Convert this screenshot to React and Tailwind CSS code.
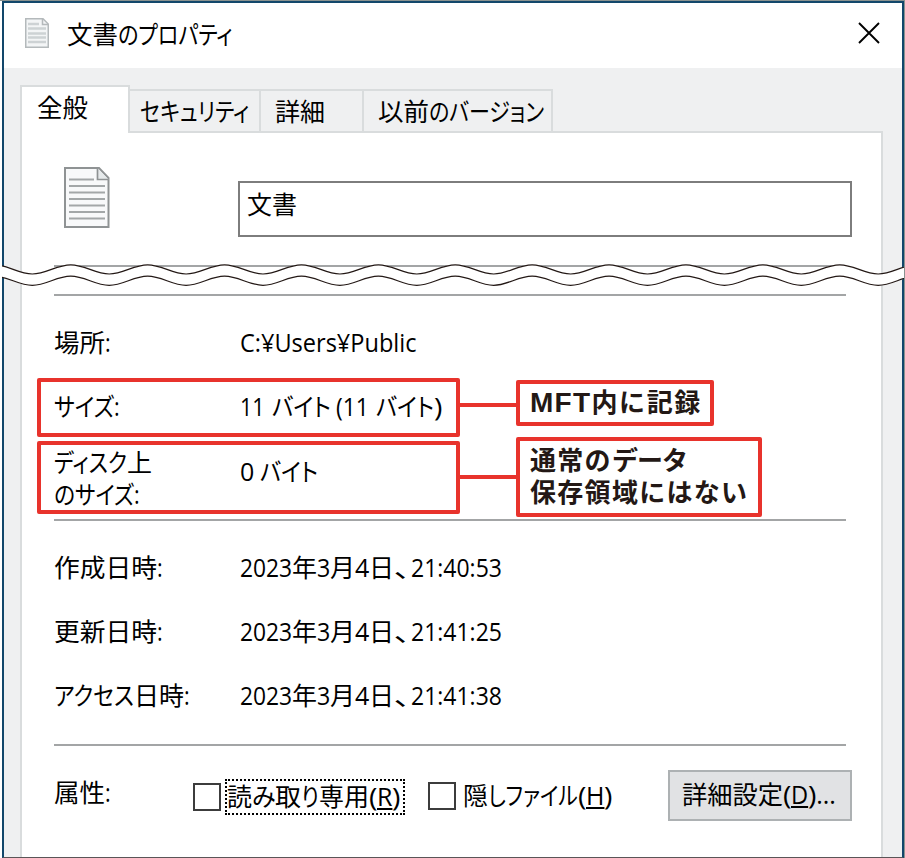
import React, { useLayoutEffect, useRef, useState } from "react";

const TABS = [
  { className: "w-[131px] pl-2.5", runs: [["セキュリティ", 109]] },
  { className: "w-[103px] pl-[14px]", runs: [["詳細", 50]] },
  { className: "w-[189px] pl-[14px]", runs: [["以前", 51], ["のバージョン", 115]] },
];

const DATES = [
  { label: [["作成日時", 103], [":", 6]], time: "21:40:53" },
  { label: [["更新日時", 103], [":", 6]], time: "21:41:25" },
  { label: [["アクセス", 80], ["日時", 50], [":", 6]], time: "21:41:38" },
];

// one piece of text squeezed to a fixed width, like the narrow kana of the Windows UI font
function Run({ w, children }) {
  const ref = useRef(null);
  const [scale, setScale] = useState(1);

  useLayoutEffect(() => {
    setScale(w / ref.current.offsetWidth);
  }, [w, children]);

  return (
    <span className="inline-block" style={{ width: w }}>
      <span ref={ref} className="inline-block origin-left whitespace-pre" style={{ transform: `scaleX(${scale})` }}>
        {children}
      </span>
    </span>
  );
}

function Text({ runs, className = "" }) {
  return (
    <span className={"flex h-8 shrink-0 whitespace-pre leading-8 [font-feature-settings:'palt'] " + className}>
      {runs.map(([text, w], i) => <Run key={i} w={w}>{text}</Run>)}
    </span>
  );
}

function Divider({ className = "" }) {
  return <div className={"ml-8 h-0.5 w-[792px] shrink-0 bg-[#a3a5a6] " + className} />;
}

function SmallDocIcon() {
  return (
    <svg width="24" height="30" viewBox="0 0 24 30" fill="none">
      <path d="M.75.75H18L23.250 6V29.250H.75Z" fill="#f3f5f6" stroke="#b4b9bb" strokeWidth="1.500" />
      <path d="M17.500 1V6.500H23" stroke="#b4b9bb" strokeWidth="1.500" />
      <path d="M3 6H14M3 10.500H21M3 15.500H21M3 19.500H21M3 24H21" stroke="#cdd2d4" strokeWidth="2.400" />
    </svg>
  );
}

function DocIcon() {
  return (
    <svg width="46" height="61" viewBox="0 0 46 61" fill="none">
      <path d="M1 1H35L44.500 11V60H1Z" fill="#f8f9fa" stroke="#8f9394" strokeWidth="2" />
      <path d="M33.500 1V12.500H44.500" fill="#e6eaeb" stroke="#8f9394" strokeWidth="1.700" />
      <path
        d="M5 12.500H30M5 19H41M5 25.500H41M5 32H41M5 38.500H41M5 45H41M5 51.500H41"
        stroke="#a3a7a8"
        strokeWidth="2"
      />
    </svg>
  );
}

// one edge of the tear: troughs at y, a crest every 76.9px
function wave(y) {
  let d = `M-44.6 ${y}`;
  for (let i = 0; i < 13; i++) {
    const x = -44.6 + i * 76.9;
    d += `C${x + 14} ${y} ${x + 24.4} ${y - 9.2} ${x + 38.45} ${y - 9.2}`;
    d += `C${x + 52.5} ${y - 9.2} ${x + 62.9} ${y} ${x + 76.9} ${y}`;
  }
  return d;
}

function Tear() {
  return (
    <svg className="absolute left-0 top-[261px]" width="905" height="26" viewBox="0 0 905 26" fill="none">
      <path d={wave(17.6)} stroke="#fff" strokeWidth="11.500" />
      <path d={wave(12)} stroke="#231815" strokeWidth="1.200" />
      <path d={wave(23.3)} stroke="#231815" strokeWidth="1.200" />
      <path d="M0 0H2V26H0Z" fill="#fff" />
    </svg>
  );
}

function Connector({ className = "" }) {
  return <div className={"h-1 w-[56px] shrink-0 bg-[#e8332c] " + className} />;
}

function Callout({ className = "", children }) {
  return (
    <div className={"shrink-0 rounded-xs border-4 border-[#e8332c] bg-white pl-[10px] font-['Liberation_Sans','Noto_Sans_CJK_JP',sans-serif] text-[26px] font-bold text-[#231815] " + className}>
      {children}
    </div>
  );
}

function CalloutLine({ children }) {
  return <div className="h-8 whitespace-nowrap leading-8 tracking-[1.3px]">{children}</div>;
}

function Checkbox() {
  return <span className="size-7 shrink-0 border-2 border-[#3c3c3c] bg-white" />;
}

export default function App() {
  return (
    <div className="relative h-[858px] w-[905px] overflow-hidden border-t border-r border-[#8a9290] bg-white pl-0.5 font-['Open_Sans','Noto_Sans_CJK_JP',sans-serif] text-[25px] text-black">
      <div className="flex h-[857px] flex-col border-2 border-b-[1.5px] border-[#12476b] border-b-[#5a5557] bg-[#eff0f1]">
        <header className="flex h-[65px] shrink-0 items-start bg-white">
          <div className="ml-[21px] mt-[15px]">
            <SmallDocIcon />
          </div>
          <Text className="ml-[18px] mt-[15px]" runs={[["文書", 51], ["のプロパティ", 115]]} />
          <svg className="ml-auto mr-[22px] mt-[19px]" width="22" height="22" viewBox="0 0 22 22">
            <path d="M1 1L21 21M21 1L1 21" stroke="#000" strokeWidth="1.900" />
          </svg>
        </header>

        <nav className="relative z-10 ml-4 mt-[17px] -mb-0.5 flex h-12 shrink-0 items-end">
          <div className="h-12 w-[110px] border-2 border-b-0 border-[#d9dcdd] bg-white pl-[15px] pt-1">
            <Text runs={[["全般", 51]]} />
          </div>
          {TABS.map((tab, i) => (
            <div key={i} className={"h-[44px] border-y-2 border-r-2 border-[#d9dcdd] pt-1 " + tab.className}>
              <Text runs={tab.runs} />
            </div>
          ))}
        </nav>

        <main className="ml-4 flex w-[863px] grow flex-col border-2 border-b-0 border-[#d9dcdd] bg-white">
          <div className="flex h-[132px] shrink-0 items-start">
            <div className="ml-[42px] mt-[34px] w-[174px]">
              <DocIcon />
            </div>
            <div className="mt-12 h-[56px] w-[614px] border-2 border-[#7d7d7d] pl-[7px] pt-[5px]">
              <Text runs={[["文書", 50]]} />
            </div>
          </div>
          <Divider />
          <Divider className="mt-[27px]" />

          <div className="ml-8 mt-[30px] flex h-[52px] shrink-0">
            <Text className="w-[186px]" runs={[["場所", 51], [":", 6]]} />
            <Text runs={[["C:¥Users¥Public", 176]]} />
          </div>

          <div className="ml-[15px] flex h-[137px] shrink-0 items-start">
            <div className="flex w-[423px] flex-col gap-1">
              <div className="flex h-[59px] rounded-xs border-4 border-[#e8332c] pl-[13px] pt-2">
                <Text className="w-[186px]" runs={[["サイズ", 60], [":", 6]]} />
                <Text
                  runs={[["11", 25], [" ", 7], ["バイト", 59], [" ", 5], ["(11", 33], [" ", 7], ["バイト", 58], [")", 8]]}
                />
              </div>
              <div className="flex h-[73px] rounded-xs border-4 border-[#e8332c] pl-[13px]">
                <div className="w-[186px] pt-px">
                  <Text runs={[["ディスク", 73], ["上", 25]]} />
                  <Text runs={[["のサイズ", 80], [":", 6]]} />
                </div>
                <Text className="mt-[10px]" runs={[["0", 14], [" ", 6], ["バイト", 58]]} />
              </div>
            </div>
            <div className="flex flex-col">
              <Connector className="mt-[25px]" />
              <Connector className="mt-[68px]" />
            </div>
            <div className="flex flex-col gap-[11px]">
              <Callout className="mt-0.5 h-[46px] w-[198px] pt-[3px]">
                <CalloutLine>
                  <span className="text-[28px]">MFT</span>
                  <span className="tracking-[1.6px]">内に記録</span>
                </CalloutLine>
              </Callout>
              <Callout className="h-20 w-[246px] pt-1">
                <CalloutLine>
                  通常の<span className="tracking-[-1px]">データ</span>
                </CalloutLine>
                <CalloutLine>保存領域にはない</CalloutLine>
              </Callout>
            </div>
          </div>
          <Divider className="mt-1" />

          <div className="ml-8 mt-[30px] flex h-[193px] shrink-0 flex-col gap-8">
            {DATES.map((row) => (
              <div key={row.time} className="flex">
                <Text className="w-[186px]" runs={row.label} />
                <Text
                  runs={[["2023", 52], ["年", 25], ["3", 13], ["月", 25], ["4", 14], ["日", 25], ["、", 17], [row.time, 91]]}
                />
              </div>
            ))}
          </div>
          <Divider />

          <div className="flex items-start">
            <Text className="ml-8 mt-[30px] w-[139px]" runs={[["属性", 51], [":", 6]]} />
            <div className="mt-[33px] flex items-center gap-1">
              <Checkbox />
              <div className="h-9 w-[180px] border-2 border-dotted border-black">
                <Text
                  className="-mt-px"
                  runs={[["読", 25], ["み", 23], ["取", 26], ["り", 18], ["専用", 50], ["(", 8], [<u className="underline-offset-2">R</u>, 15], [")", 8]]}
                />
              </div>
            </div>
            <div className="ml-[23px] mt-[35px] flex items-center">
              <Checkbox />
              <Text
                className="-mt-0.5 ml-[7px]"
                runs={[["隠", 25], ["しファイル", 90], ["(", 8], [<u className="underline-offset-2">H</u>, 18], [")", 8]]}
              />
            </div>
            <button className="ml-[56px] mt-6 h-[51px] w-[184px] border-2 border-[#adb1b3] bg-[#e1e2e4] pb-1 pl-3">
              <Text
                runs={[["詳細設定", 101], ["(", 8], [<u className="underline-offset-2">D</u>, 17], [")", 8], ["...", 20]]}
              />
            </button>
          </div>
        </main>
      </div>
      <Tear />
    </div>
  );
}
